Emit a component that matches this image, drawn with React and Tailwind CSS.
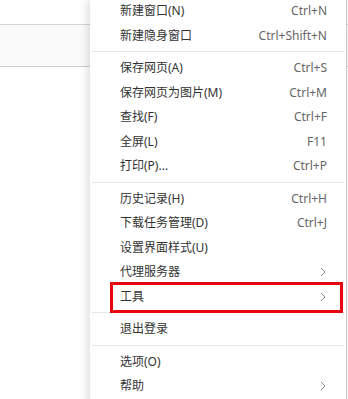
import React from 'react';

const groups = [
  [
    { label: '新建窗口(N)', key: 'Ctrl+N' },
    { label: '新建隐身窗口', key: 'Ctrl+Shift+N' },
  ],
  [
    { label: '保存网页(A)', key: 'Ctrl+S' },
    { label: '保存网页为图片(M)', key: 'Ctrl+M' },
    { label: '查找(F)', key: 'Ctrl+F' },
    { label: '全屏(L)', key: 'F11' },
    { label: '打印(P)...', key: 'Ctrl+P' },
  ],
  [
    { label: '历史记录(H)', key: 'Ctrl+H' },
    { label: '下载任务管理(D)', key: 'Ctrl+J' },
    { label: '设置界面样式(U)' },
    { label: '代理服务器', sub: true },
    { label: '工具', sub: true },
  ],
  [{ label: '退出登录' }],
  [
    { label: '选项(O)' },
    { label: '帮助', sub: true },
  ],
];

const Chevron = () => (
  <svg width="6" height="10" viewBox="0 0 6 10" className="mr-[1px]">
    <path d="M1 1 L5 5 L1 9" fill="none" stroke="#8a8a8a" strokeWidth="1" />
  </svg>
);

const Item = ({ item }) => (
  <div className="h-[24.5px] flex items-center justify-between pl-[30px] pr-[19px]">
    <span className="text-[#333]">{item.label}</span>
    {item.key && <span className="text-[#666]">{item.key}</span>}
    {item.sub && <Chevron />}
  </div>
);

export default function App() {
  return (
    <div
      className="relative w-[348px] h-[399px] overflow-hidden bg-white text-[12px]"
      style={{ fontFamily: '"Noto Sans", "Noto Sans CJK SC", sans-serif' }}
    >
      {/* browser chrome behind the menu */}
      <div className="h-[25px] bg-white border-b border-[#d4d4d4]" />
      <div className="h-[42px] bg-[#fafafa] border-b border-[#cfcfcf]" />

      {/* dropdown menu */}
      <div className="absolute left-[90px] top-[-1.25px] w-[257px] h-[410px] bg-white border-r border-[#c8c8c8] shadow-[-3px_0_8px_rgba(0,0,0,0.12)]">
        {groups.map((g, gi) => (
          <div key={gi}>
            {gi > 0 && (
              <div className="h-[8px] flex items-center px-[2px]">
                <div className="h-px w-full bg-[#e6e6e6]" />
              </div>
            )}
            {g.map((item) => (
              <Item key={item.label} item={item} />
            ))}
          </div>
        ))}

        {/* highlight annotation around 工具 */}
        <div className="absolute left-[20px] top-[283.25px] w-[233px] h-[31px] border-[3px] border-[#e8060e]" />
      </div>
    </div>
  );
}
